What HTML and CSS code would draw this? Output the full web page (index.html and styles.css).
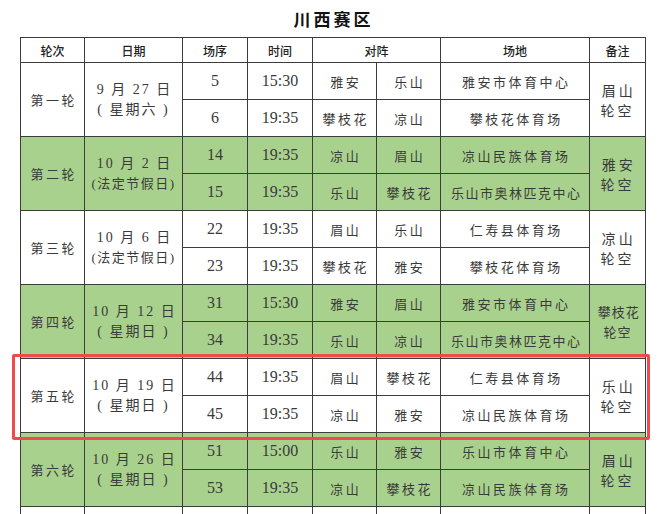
FILE: index.html
```html
<!DOCTYPE html>
<html lang="zh">
<head>
<meta charset="utf-8">
<link rel="stylesheet" href="styles.css">
</head>
<body>
<div class="page">
  <h1 class="title">川西赛区</h1>
  <table class="sched">
    <colgroup>
      <col class="c1"><col class="c2"><col class="c3"><col class="c4">
      <col class="c5"><col class="c6"><col class="c7"><col class="c8">
    </colgroup>
    <thead>
      <tr class="head">
        <th>轮次</th><th>日期</th><th>场序</th><th>时间</th><th colspan="2">对阵</th><th>场地</th><th>备注</th>
      </tr>
    </thead>
    <tbody class="w">
      <tr>
        <td rowspan="2" class="zh">第一轮</td>
        <td rowspan="2" class="date">9 月 27 日<br>( 星期六 )</td>
        <td class="num">5</td><td class="num">15:30</td><td class="zh">雅安</td><td class="zh">乐山</td><td class="zh">雅安市体育中心</td>
        <td rowspan="2" class="zh note">眉山<br>轮空</td>
      </tr>
      <tr>
        <td class="num">6</td><td class="num">19:35</td><td class="zh">攀枝花</td><td class="zh">凉山</td><td class="zh">攀枝花体育场</td>
      </tr>
    </tbody>
    <tbody class="g">
      <tr>
        <td rowspan="2" class="zh">第二轮</td>
        <td rowspan="2" class="date">10 月 2 日<br><span class="hol">(法定节假日)</span></td>
        <td class="num">14</td><td class="num">19:35</td><td class="zh">凉山</td><td class="zh">眉山</td><td class="zh">凉山民族体育场</td>
        <td rowspan="2" class="zh note">雅安<br>轮空</td>
      </tr>
      <tr>
        <td class="num">15</td><td class="num">19:35</td><td class="zh">乐山</td><td class="zh">攀枝花</td><td class="zh tight">乐山市奥林匹克中心</td>
      </tr>
    </tbody>
    <tbody class="w">
      <tr>
        <td rowspan="2" class="zh">第三轮</td>
        <td rowspan="2" class="date">10 月 6 日<br><span class="hol">(法定节假日)</span></td>
        <td class="num">22</td><td class="num">19:35</td><td class="zh">眉山</td><td class="zh">乐山</td><td class="zh">仁寿县体育场</td>
        <td rowspan="2" class="zh note">凉山<br>轮空</td>
      </tr>
      <tr>
        <td class="num">23</td><td class="num">19:35</td><td class="zh">攀枝花</td><td class="zh">雅安</td><td class="zh">攀枝花体育场</td>
      </tr>
    </tbody>
    <tbody class="g">
      <tr>
        <td rowspan="2" class="zh">第四轮</td>
        <td rowspan="2" class="date">10 月 12 日<br>( 星期日 )</td>
        <td class="num">31</td><td class="num">15:30</td><td class="zh">雅安</td><td class="zh">眉山</td><td class="zh">雅安市体育中心</td>
        <td rowspan="2" class="zh note small">攀枝花<br>轮空</td>
      </tr>
      <tr>
        <td class="num">34</td><td class="num">19:35</td><td class="zh">乐山</td><td class="zh">凉山</td><td class="zh tight">乐山市奥林匹克中心</td>
      </tr>
    </tbody>
    <tbody class="w">
      <tr>
        <td rowspan="2" class="zh">第五轮</td>
        <td rowspan="2" class="date">10 月 19 日<br>( 星期日 )</td>
        <td class="num">44</td><td class="num">19:35</td><td class="zh">眉山</td><td class="zh">攀枝花</td><td class="zh">仁寿县体育场</td>
        <td rowspan="2" class="zh note">乐山<br>轮空</td>
      </tr>
      <tr>
        <td class="num">45</td><td class="num">19:35</td><td class="zh">凉山</td><td class="zh">雅安</td><td class="zh">凉山民族体育场</td>
      </tr>
    </tbody>
    <tbody class="g">
      <tr>
        <td rowspan="2" class="zh">第六轮</td>
        <td rowspan="2" class="date">10 月 26 日<br>( 星期日 )</td>
        <td class="num">51</td><td class="num">15:00</td><td class="zh">乐山</td><td class="zh">雅安</td><td class="zh">乐山市体育中心</td>
        <td rowspan="2" class="zh note">眉山<br>轮空</td>
      </tr>
      <tr>
        <td class="num">53</td><td class="num">19:35</td><td class="zh">凉山</td><td class="zh">攀枝花</td><td class="zh">凉山民族体育场</td>
      </tr>
    </tbody>
    <tbody class="w">
      <tr>
        <td></td><td></td><td></td><td></td><td></td><td></td><td></td><td></td>
      </tr>
    </tbody>
  </table>
  <div class="highlight"></div>
</div>
</body>
</html>
```
FILE: styles.css
```css
html, body {
  margin: 0;
  padding: 0;
  background: #ffffff;
  overflow: hidden;
}
.page {
  position: relative;
  width: 664px;
  height: 514px;
  overflow: hidden;
}
.title {
  margin: 0;
  height: 37px;
  line-height: 37px;
  text-align: center;
  font-family: "Noto Sans CJK SC", sans-serif;
  font-size: 17px;
  font-weight: 700;
  letter-spacing: 3px;
  color: #111;
  padding-left: 3px;
}
.sched {
  margin-left: 20px;
  width: 626px;
  table-layout: fixed;
  border-collapse: collapse;
  border: 1.5px solid #1a1a1a;
  font-family: "Liberation Serif", "Noto Sans CJK SC", serif;
  color: #3a3a3a;
}
.c1 { width: 64px; }
.c2 { width: 98px; }
.c3 { width: 65px; }
.c4 { width: 65px; }
.c5 { width: 64px; }
.c6 { width: 64px; }
.c7 { width: 149px; }
.c8 { width: 56px; }
.sched th, .sched td {
  border: 1px solid #3c3c3c;
  padding: 0;
  text-align: center;
  vertical-align: middle;
  overflow: hidden;
  white-space: nowrap;
}
.head th {
  height: 24px;
  font-family: "Noto Sans CJK SC", sans-serif;
  font-size: 12px;
  font-weight: 500;
  color: #222;
}
.sched tbody tr {
  height: 37px;
}
.sched tbody {
  border-top: 1.5px solid #555;
}
.w td { background: #ffffff; }
.g td { background: #a9d18e; }
.zh {
  font-family: "Noto Sans CJK SC", sans-serif;
  font-size: 13px;
  letter-spacing: 2.5px;
  text-indent: 2.5px;
}
.tight {
  letter-spacing: 1.5px;
}
.num {
  font-size: 16px;
}
.date {
  font-family: "Liberation Serif", "Noto Sans CJK SC", serif;
  font-size: 14px;
  line-height: 20px;
  letter-spacing: 2px;
  text-indent: 2px;
}
.hol {
  font-size: 13px;
  letter-spacing: 1.5px;
}
.note {
  line-height: 20px;
  font-size: 14px;
  letter-spacing: 3px;
}
.note.small {
  letter-spacing: 1px;
  font-size: 13px;
}
.highlight {
  position: absolute;
  left: 12px;
  top: 354px;
  width: 632px;
  height: 80px;
  border: 3px solid #f04a4c;
  border-radius: 2px;
}
```
